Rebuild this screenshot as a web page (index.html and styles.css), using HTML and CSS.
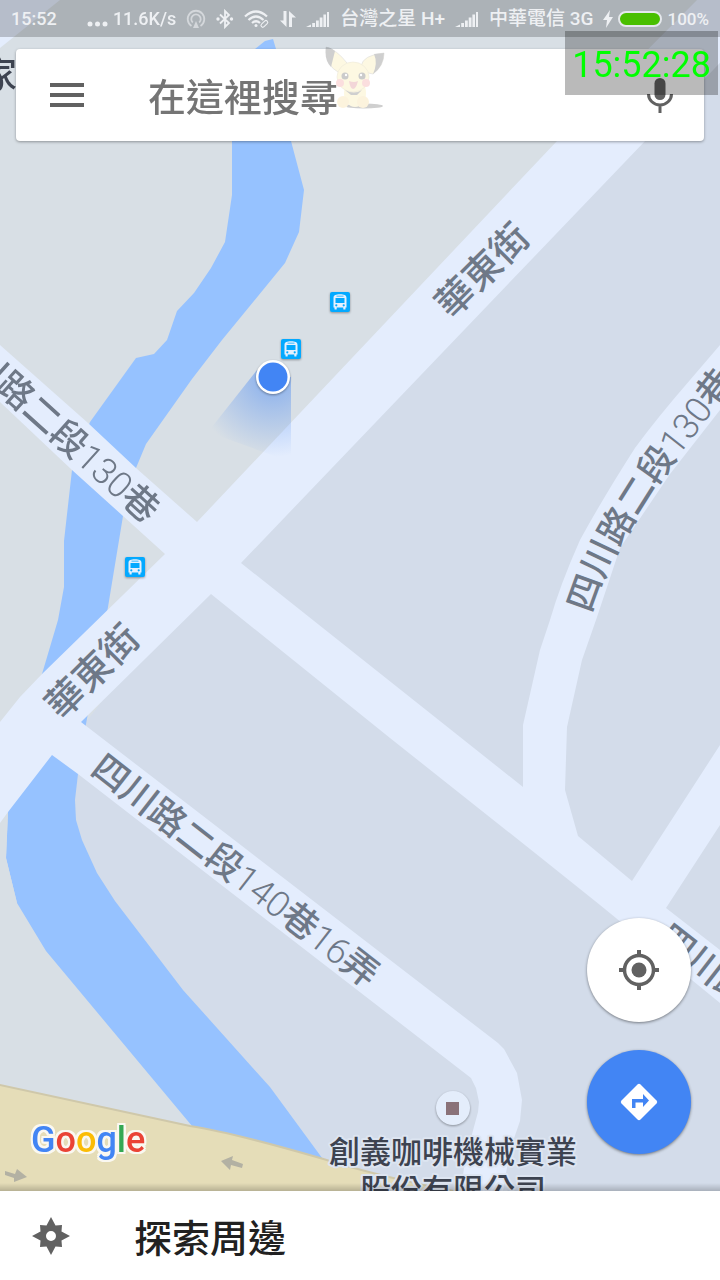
FILE: index.html
```html
<!DOCTYPE html>
<html lang="zh-Hant">
<head>
<meta charset="utf-8">
<meta name="viewport" content="width=device-width, initial-scale=1">
<title>地圖</title>
<link rel="stylesheet" href="styles.css">
</head>
<body>
<main class="map">
  <svg class="map-canvas" viewBox="0 0 720 1191" preserveAspectRatio="xMinYMin slice" role="img" aria-label="華東街附近地圖">
    <defs>
      <radialGradient id="beam" gradientUnits="userSpaceOnUse" cx="273" cy="377" r="80">
        <stop offset="0" stop-color="#4285f4" stop-opacity=".55"/>
        <stop offset=".4" stop-color="#4285f4" stop-opacity=".32"/>
        <stop offset="1" stop-color="#4285f4" stop-opacity="0"/>
      </radialGradient>
      <symbol id="bus" viewBox="0 0 20 20">
        <rect width="20" height="20" rx="2" fill="#03a9ff"/>
        <path fill="#e6f0fd" d="M3.5 6C3.5 3 6 2.3 10 2.3S16.500 3 16.500 6v9.500h-1V17a.6.6 0 0 1-.6.600h-1a.6.6 0 0 1-.6-.6v-1.500H6.700V17a.6.6 0 0 1-.6.600h-1a.6.6 0 0 1-.6-.6v-1.500h-1z"/>
        <path fill="#03a9ff" d="M6.500 3.800h7v.8h-7zM5.500 6h9v5h-9z"/>
        <circle cx="6.300" cy="13.300" r="1.100" fill="#03a9ff"/>
        <circle cx="13.700" cy="13.300" r="1.100" fill="#03a9ff"/>
      </symbol>
      <path id="lane-curve" d="M591 614Q599 588 611 563Q627 532 645 504Q665 472 691 440L740 376"/>
    </defs>
    <rect class="block-west" width="720" height="1191"/>
    <path class="block-east" d="M697 0H720V1191H340L321 1157L270 1087L183 990L115 901L97 873L82 840L76 820L75 800L78 774L86 722L211 560L557 141Z"/>
    <path class="water" d="M255 49L265 41L273 39L276 49L291 141L304 190L299 232L285 263L222 340L192 379L146 444L136 468L123 516L108 607L86 724L78 774L75 800L76 820L82 840L97 873L115 901L183 990L270 1087L325 1162L192 1126L46 951L17 903L6 858L8 812L42 674L58 620L64 587V541L72 470L90 422L136 358L154 354L167 340L177 311L194 293L211 268L225 242L232 195V141Z"/>
    <path class="block-west" d="M0 820L8 812L6 858L17 903L0 920Z"/>
    <path class="sand" d="M-5 1084L190 1126Q230 1132 320 1158Q390 1180 480 1196H-5Z"/>
    <path class="road" d="M0 0H60L0 48Z"/>
    <path class="road" d="M697 0H780L241 563L523 787V725L540 650L550 620Q560 585 580 540Q603 498 635 448Q657 418 690 380L720 345V410L670 474L620 548L596 620L582 660L567 727L565 790L578 836L632 881L720 745V825L666 908L720 950V1003L600 905L540 857L390 738L211 594L81 722L498 1043L504 1049L517 1073L522 1100L520 1121L510 1150L503 1191H461L465 1160L478 1112L479 1102L476 1088L471 1078L78 774L52 755L8 812L0 823V722L20 697L42 674L165 554L123 516L72 470L0 402V345L88 423L136 468L197 522L557 141Z"/>
    <path class="lane-arrow" d="M221 1161L233 1156L232 1160L243 1164L242 1168L231 1165L230 1170Z"/>
    <path class="lane-arrow" d="M27 1177L17 1169L15 1174L5 1171V1175L14 1178L14 1182Z"/>

    <path fill="url(#beam)" d="M257 370L208 432L291 462V377Z"/>
    <g class="raised"><use href="#bus" x="330" y="292" width="20" height="20"/>
    <use href="#bus" x="281" y="339" width="20" height="20"/>
    <use href="#bus" x="125" y="557" width="20" height="20"/></g>
    <circle class="raised" cx="273" cy="377" r="17" fill="#fff"/>
    <circle cx="273" cy="377" r="14.500" fill="#4285f4"/>

    <text class="place" x="-19" y="88">家</text>
    <text class="street" transform="translate(482 270) rotate(-45)" y="14">華東街</text>
    <text class="street" transform="translate(92 671) rotate(-45)" y="14">華東街</text>
    <text class="lane lane-end" transform="translate(154 515) rotate(42)" y="13">四川路二段<tspan class="number">130</tspan>巷</text>
    <text class="lane" transform="translate(97 762) rotate(38)" y="13">四川路二段<tspan class="number">140</tspan>巷<tspan class="number">16</tspan>弄</text>
    <text class="lane" transform="translate(663 932) rotate(38)" y="13">四川路二段</text>
    <text class="lane"><textPath href="#lane-curve">四川路二段<tspan class="number">130</tspan>巷</textPath></text>

    <circle class="raised" cx="453" cy="1108" r="17" fill="#e4edfb"/>
    <rect x="446" y="1102" width="13" height="13" fill="#8a7279"/>
    <text class="place place-name" x="453" y="1163">創義咖啡機械實業</text>
    <text class="place place-name" x="453" y="1201">股份有限公司</text>
  </svg>

  <header class="status">
    <time class="status-time">15:52</time>
    <svg width="21" height="20" viewBox="0 0 21 20" fill="currentColor"><circle cx="3" cy="15" r="2.500"/><circle cx="10.500" cy="15" r="2.500"/><circle cx="18" cy="15" r="2.500"/></svg>
    <span class="status-speed">11.6K/s</span>
    <svg class="dim" width="20" height="20" viewBox="0 0 20 20" fill="none" stroke="currentColor" stroke-width="1.800"><path d="M5.500 17A8.300 8.300 0 1 1 14.500 17M6.800 13.500A4.700 4.700 0 1 1 13.200 13.500"/><path d="M10 12L13 19H7Z" fill="currentColor" stroke="none"/></svg>
    <svg width="18" height="20" viewBox="0 0 18 20" fill="none" stroke="currentColor" stroke-width="1.800"><path d="M4 5.500L13 14L9 18V2L13 6L4 14.500"/><circle cx="2" cy="10" r=".8"/><circle cx="15.500" cy="10" r=".8"/></svg>
    <svg width="26" height="20" viewBox="0 0 26 20" fill="none" stroke="currentColor" stroke-width="2.200"><path d="M1 7.500Q12 -2.500 23 7.500M4.500 11Q12 4 19.500 11M8 14Q12 10.500 16 14"/><circle cx="12" cy="16.500" r="1.500" fill="currentColor" stroke="none"/><rect x="16.500" y="13" width="8" height="3.600" rx="1.800" transform="rotate(-45 20.500 15)" stroke-width="1.100"/></svg>
    <svg width="16" height="20" viewBox="0 0 16 20" fill="currentColor"><path d="M3.500 2H6.500V18L0 11.500H3.500ZM9 2L16 8.500H12V18H9Z"/></svg>
    <svg width="24" height="20" viewBox="0 0 24 20" fill="currentColor"><path d="M0 18L5 15.500V18ZM6.200 14H9V18H6.200ZM10 11.500H12.800V18H10ZM13.700 8.500H16.500V18H13.700ZM17.400 5.500H20V18H17.400ZM21 3H23V18H21Z"/></svg>
    <span class="carrier">台灣之星 H+</span>
    <svg width="24" height="20" viewBox="0 0 24 20" fill="currentColor"><path d="M0 18L5 15.500V18ZM6.200 14H9V18H6.200ZM10 11.500H12.800V18H10ZM13.700 8.500H16.500V18H13.700ZM17.400 5.500H20V18H17.400ZM21 3H23V18H21Z"/></svg>
    <span class="carrier">中華電信 3G</span>
    <span class="status-power">
      <svg width="10" height="18" viewBox="0 0 10 18" fill="currentColor"><path d="M7 0L0 10H4L3 18L10 7H6Z"/></svg>
      <svg width="44" height="16" viewBox="0 0 44 16"><rect x="1" y="1" width="42" height="14" rx="7" fill="#49bf00" stroke="#e5e8ec" stroke-width="2"/></svg>
      <span class="status-percent">100%</span>
    </span>
  </header>

  <form class="search" role="search">
    <button class="icon-button" type="button" aria-label="選單">
      <svg width="34" height="26" viewBox="0 0 34 26" stroke="#616161" stroke-width="4"><path d="M0 3H34M0 13H34M0 23H34"/></svg>
    </button>
    <input class="search-input" type="search" placeholder="在這裡搜尋" aria-label="在這裡搜尋">
    <button class="icon-button" type="button" aria-label="語音搜尋">
      <svg width="26" height="36" viewBox="0 0 26 36"><rect x="7.500" y="1" width="11" height="22" rx="5.500" fill="#616161"/><path d="M1.500 17A11.500 11 0 0 0 24.500 17M13 28V36" fill="none" stroke="#616161" stroke-width="3"/></svg>
    </button>
  </form>

  <svg class="mascot" width="60" height="63" viewBox="0 0 60 63" aria-hidden="true">
    <ellipse cx="39" cy="60" rx="19" ry="2.500" fill="#444"/>
    <path d="M1 1Q12 4 22 17L13 26Q1 20 1 1Z" fill="#f8e58e" stroke="#777" stroke-width=".6"/>
    <path d="M1 1Q5 1 10 5L6 21Q-1 14 1 1Z" fill="#444"/>
    <path d="M36 20Q38 9 59 7Q59 20 48 28Q39 27 36 20Z" fill="#f8e58e" stroke="#777" stroke-width=".6"/>
    <path d="M49 8L59 7Q59 20 48 28Q53 17 49 8Z" fill="#444"/>
    <ellipse cx="30" cy="47" rx="11" ry="14" fill="#f8e58e"/>
    <ellipse cx="28" cy="31" rx="16" ry="15" fill="#f8e58e" stroke="#bba86b" stroke-width=".6"/>
    <path d="M20 44Q29 49 37 44L32 49H26Z" fill="#444"/>
    <ellipse cx="18" cy="56" rx="6" ry="6" fill="#f5d07b"/>
    <ellipse cx="38" cy="56" rx="6" ry="6" fill="#f5d07b"/>
    <circle cx="20" cy="30" r="3.500" fill="#333"/><circle cx="37" cy="30" r="3.500" fill="#333"/>
    <circle cx="21" cy="29" r="1.200" fill="#fff"/><circle cx="36" cy="29" r="1.200" fill="#fff"/>
    <circle cx="15" cy="37" r="4" fill="#f08080"/><circle cx="41" cy="37" r="4" fill="#f08080"/>
    <path d="M24 35Q29 37 33 35Q31 43 28 43Q25 42 24 35Z" fill="#d35f69"/>
  </svg>
  <div class="clock">15:52:28</div>

  <div class="map-footer">
    <div class="brand" aria-label="Google"><span class="blue">G</span><span class="red">o</span><span class="yellow">o</span><span class="blue">g</span><span class="green">l</span><span class="red">e</span></div>
    <div class="actions">
      <button class="fab" type="button" aria-label="我的位置">
        <svg width="40" height="40" viewBox="0 0 40 40" fill="none" stroke="#616161"><circle cx="20" cy="20" r="14.500" stroke-width="3.500"/><path d="M20 0V6M20 34V40M0 20H6M34 20H40" stroke-width="4"/><circle cx="20" cy="20" r="7.500" fill="#616161" stroke="none"/></svg>
      </button>
      <button class="fab fab-primary" type="button" aria-label="路線">
        <svg width="38" height="38" viewBox="0 0 38 38"><path d="M17.500 1.500Q19 0 20.500 1.500L36.500 17.500Q38 19 36.500 20.500L20.500 36.500Q19 38 17.500 36.500L1.500 20.500Q0 19 1.500 17.500Z" fill="#fff"/><path d="M12 25V16H23V11L29 17.500L23 24V19.500H15.500V25Z" fill="#4285f4"/></svg>
      </button>
    </div>
  </div>
</main>

<footer>
  <button class="explore" type="button">
    <svg width="38" height="38" viewBox="0 0 38 38"><path fill="#616161" fill-rule="evenodd" d="M19 0L23.500 8.500L30 8L29.500 14.500L38 19L29.500 23.500L30 30L23.500 29.500L19 38L14.500 29.500L8 30L8.500 23.500L0 19L8.500 14.500L8 8L14.500 8.500ZM19 14A5 5 0 1 0 19 24A5 5 0 1 0 19 14Z"/></svg>
    <span>探索周邊</span>
  </button>
</footer>
</body>
</html>
```

FILE: styles.css
```css
* {
  box-sizing: border-box;
}

body {
  margin: 0;
  min-height: 100vh;
  display: flex;
  flex-direction: column;
  background: #fff;
  font-family: Roboto, "Noto Sans CJK TC", sans-serif;
}

svg {
  display: block;
  flex: none;
}

button {
  border: 0;
  padding: 0;
  background: none;
  color: inherit;
  font: inherit;
  cursor: pointer;
}

.map {
  position: relative;
  flex: 1;
  display: flex;
  flex-direction: column;
  overflow: hidden;
}

.map::after {
  content: "";
  position: absolute;
  inset: auto 0 0;
  height: 8px;
  background: linear-gradient(transparent, rgba(0, 0, 0, 0.2));
}

.map-canvas {
  position: absolute;
  inset: 0;
  width: 100%;
  height: 100%;
}

.block-west { fill: #d8dfe5; }
.block-east { fill: #d3dcea; }
.water { fill: #96c2ff; }
.road { fill: #e4edfd; }
.lane-arrow { fill: #b3b1a3; }

.sand {
  fill: #e5ddb8;
  stroke: #cfc8aa;
  stroke-width: 2px;
}

.raised {
  filter: drop-shadow(0 1px 1px rgba(0, 0, 0, 0.35));
}

.street,
.lane {
  fill: #6e7887;
  font-family: "Noto Sans CJK TC", sans-serif;
  font-weight: 500;
}

.street {
  font-size: 38px;
  text-anchor: middle;
}

.lane {
  font-size: 36px;
}

.lane-end {
  text-anchor: end;
}

.number {
  font-family: Roboto, sans-serif;
  font-weight: 300;
}

.place {
  fill: #3d4350;
  font-family: "Noto Sans CJK TC", sans-serif;
  font-size: 36px;
  font-weight: 500;
}

.place-name {
  font-size: 31px;
  text-anchor: middle;
  stroke: #dde5f1;
  stroke-width: 4px;
  stroke-linejoin: round;
  paint-order: stroke;
}

.status {
  position: relative;
  display: flex;
  align-items: center;
  gap: 10px;
  height: 37px;
  padding: 0 11px;
  background: rgba(0, 0, 0, 0.2);
  color: #eef0f3;
  font-size: 18px;
  font-weight: 500;
  line-height: 24px;
  white-space: nowrap;
}

.status-time {
  margin-right: auto;
}

.status-speed {
  margin-left: -5px;
}

.carrier {
  font-size: 19px;
}

.status-percent {
  font-size: 17px;
}

.dim {
  opacity: 0.6;
}

.status-power {
  display: flex;
  align-items: center;
  gap: 5px;
}

.search {
  position: relative;
  display: flex;
  align-items: center;
  height: 92px;
  margin: 12px 16px 0;
  padding: 0 31px 0 34px;
  border-radius: 4px;
  background: #fff;
  box-shadow: 0 1px 3px rgba(0, 0, 0, 0.35);
}

.search-input {
  flex: 1;
  min-width: 0;
  margin-left: 64px;
  padding: 0;
  border: 0;
  outline: 0;
  background: none;
  color: #212121;
  font: 500 38px/56px "Noto Sans CJK TC", sans-serif;
}

.search-input::placeholder {
  color: #757575;
  opacity: 1;
}

.mascot {
  position: absolute;
  top: 46px;
  left: 325px;
  opacity: 0.25;
}

.clock {
  position: absolute;
  top: 31px;
  right: 2px;
  padding: 4px 7px 0;
  background: rgba(0, 0, 0, 0.27);
  color: #0f0;
  font-size: 36px;
  line-height: 60px;
  pointer-events: none;
}

.map-footer {
  position: relative;
  display: flex;
  align-items: flex-end;
  justify-content: space-between;
  margin-top: auto;
  padding: 0 29px 29px 31px;
}

.brand {
  font: 500 36px/44px Roboto, sans-serif;
  filter: drop-shadow(2px 0 0 #faf8f1) drop-shadow(-2px 0 0 #faf8f1) drop-shadow(0 2px 0 #faf8f1) drop-shadow(0 -2px 0 #faf8f1);
}

.blue { color: #4285f4; }
.red { color: #ea4335; }
.yellow { color: #fbbc05; }
.green { color: #34a853; }

.actions {
  display: flex;
  flex-direction: column;
  gap: 28px;
  padding-bottom: 8px;
}

.fab {
  display: grid;
  place-items: center;
  width: 104px;
  height: 104px;
  border-radius: 50%;
  background: #fff;
  box-shadow: 0 1px 3px rgba(0, 0, 0, 0.45);
}

.fab-primary {
  background: #4285f4;
}

.explore {
  display: flex;
  align-items: center;
  gap: 64px;
  width: 100%;
  height: 89px;
  padding: 0 32px;
  color: #212121;
  font: 500 38px/56px "Noto Sans CJK TC", sans-serif;
}
```
